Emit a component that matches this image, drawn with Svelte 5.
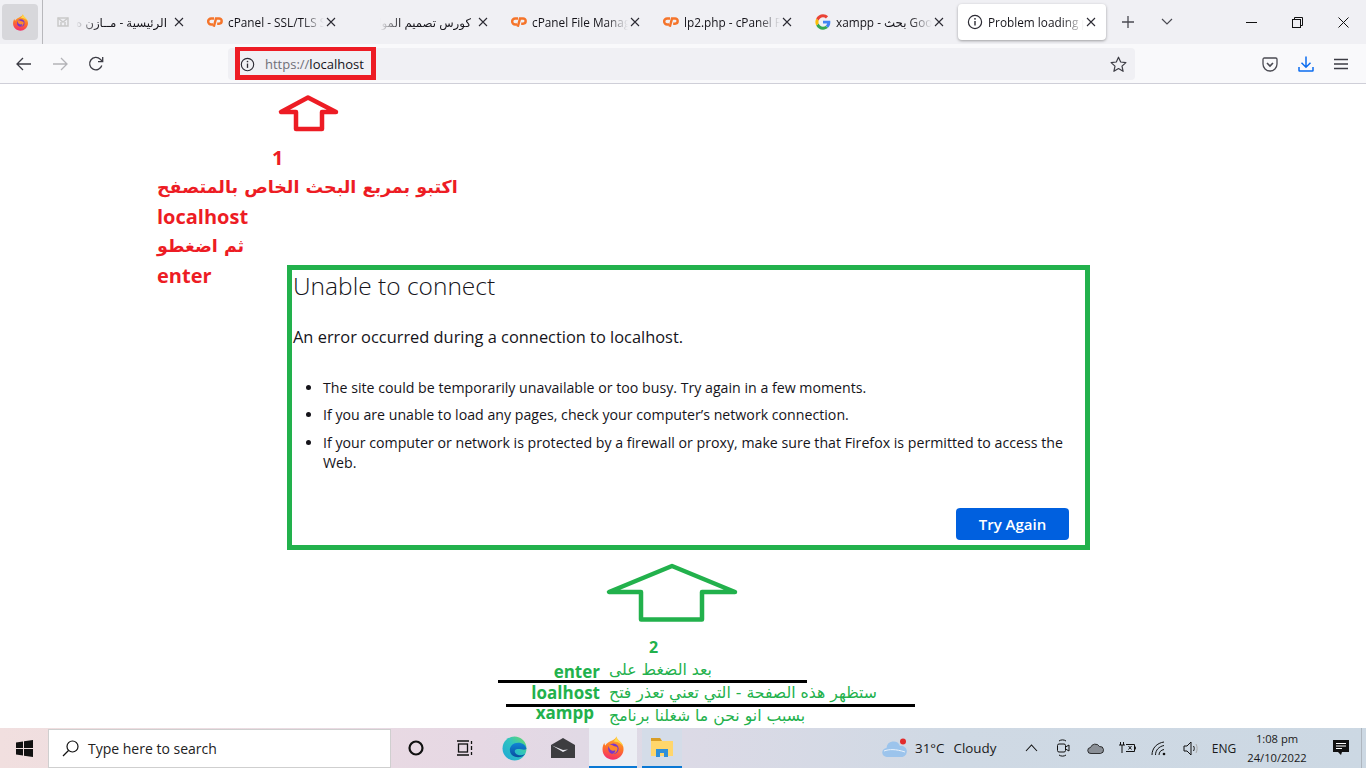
<script>
  const tabs = [
    { title: "الرئيسية - مــازن ه", icon: "mail", rtl: true },
    { title: "cPanel - SSL/TLS S", icon: "cp" },
    { title: "كورس تصميم المواقع -", icon: "none", rtl: true },
    { title: "cPanel File Manag", icon: "cp" },
    { title: "lp2.php - cPanel F", icon: "cp" },
    { title: "xampp - بحث Goo", icon: "g" },
    { title: "Problem loading p", icon: "info", active: true }
  ];
  const tips = [
    "The site could be temporarily unavailable or too busy. Try again in a few moments.",
    "If you are unable to load any pages, check your computer’s network connection.",
    "If your computer or network is protected by a firewall or proxy, make sure that Firefox is permitted to access the Web."
  ];
</script>

{#snippet fox(size)}
  <svg width={size} height={size} viewBox="0 0 32 32">
    <defs>
      <linearGradient id="foxg" x1="0.6" y1="0" x2="0.4" y2="1">
        <stop offset="0" stop-color="#ffb52e" />
        <stop offset="0.5" stop-color="#ff7426" />
        <stop offset="1" stop-color="#f42c6c" />
      </linearGradient>
    </defs>
    <path d="M20.500 0.500c.5 3 2.500 4.500 4.500 6.500 4 3.500 5.500 7.500 5 12-.8 7-7 12.500-14 12.500C8 31.500 2 25.500 2 18c0-3.500 1-6.500 2.500-9 0 1.500.5 3 1.500 3.500C7 9.500 10 8.500 12.500 7c3-1.800 7-3 8-6.500z" fill="url(#foxg)" />
    <path d="M20.500 0.500c.5 3 2.500 4.500 4.500 6.500 2.500 2.200 4 4.500 4.700 7-2-3-4.700-5-8.200-6-1.500-.5-3-.5-5-1 2-1.500 3.500-3.500 4-6.500z" fill="#ffd84a" />
    <circle cx="16.500" cy="17" r="7" fill="#7a35c9" />
    <path d="M10 12.500c2.500-1.500 5-.5 6.500.5 2 1 4.500.5 5.500 2.500.5 4.500-3 8.500-7.500 8 3 .2 5-2 4.500-4.500-3 1.500-7.500.5-9-6.500z" fill="#ff8a2b" />
  </svg>
{/snippet}

{#snippet info(size)}
  <svg width={size} height={size} viewBox="0 0 16 16" fill="none" stroke="#2b2a33" stroke-width="1.2">
    <circle cx="8" cy="8" r="6.6" />
    <path d="M8 7v4.600" stroke-width="1.4" />
    <circle cx="8" cy="4.800" r="0.9" fill="#2b2a33" stroke="none" />
  </svg>
{/snippet}

<div class="screen">
  <header class="tabbar">
    <div class="appbtn">{@render fox(17)}</div>
    <div class="sep"></div>
    <div class="tabs">
      {#each tabs as t}
        <div class="tab" class:active={t.active}>
          <span class="fav">
            {#if t.icon === "cp"}
              <svg width="17" height="12" viewBox="0 0 17 12" fill="none" stroke="#f5742a" stroke-width="2.6">
                <path d="M7.500 2.200H4.400a3.200 3.200 0 0 0 0 6.400h2" />
                <path d="M7.200 11l2.400-8.800h3.200a2.600 2.600 0 0 1 0 5.600h-2" />
              </svg>
            {:else if t.icon === "g"}
              <svg width="16" height="16" viewBox="0 0 48 48">
                <path fill="#4285f4" d="M46 24.500c0-1.600-.1-3.100-.4-4.500H24v8.500h12.400c-.5 2.900-2.100 5.300-4.600 7l7.200 5.600C43.200 37.200 46 31.400 46 24.500z" />
                <path fill="#34a853" d="M24 47c6.200 0 11.400-2 15-5.500l-7.200-5.600c-2 1.300-4.600 2.100-7.800 2.100-6 0-11-4-12.900-9.500l-7.400 5.800C7.500 41.900 15.100 47 24 47z" />
                <path fill="#fbbc05" d="M11.100 28.500c-.5-1.400-.7-2.900-.7-4.500s.3-3.100.7-4.500l-7.400-5.800C2.300 16.800 1 20.300 1 24s1.300 7.200 2.700 10.300z" />
                <path fill="#ea4335" d="M24 10c3.400 0 6.400 1.200 8.800 3.400l6.400-6.400C35.400 3.400 30.200 1 24 1 15.100 1 7.500 6.100 3.700 13.700l7.400 5.800C13 14 18 10 24 10z" />
              </svg>
            {:else if t.icon === "info"}
              {@render info(16)}
            {:else if t.icon === "mail"}
              <svg width="12" height="12" viewBox="0 0 12 12" fill="none" stroke="#c9c9c9" stroke-width="1.500">
                <rect x="1" y="2" width="10" height="8" />
                <path d="M1 2l5 4 5-4M4 6v4M8 6v4" />
              </svg>
            {/if}
          </span>
          <span class="title" class:rtl={t.rtl} dir={t.rtl ? "rtl" : "ltr"}>{t.title}</span>
          <svg class="close" width="10" height="10" viewBox="0 0 10 10" stroke="#2b2a33" stroke-width="1.100">
            <path d="M1 1l8 8M9 1l-8 8" />
          </svg>
        </div>
      {/each}
    </div>
    <div class="newtab">
      <svg width="14" height="14" viewBox="0 0 14 14" stroke="#4a4a52" stroke-width="1.300"><path d="M7 1v12M1 7h12" /></svg>
    </div>
    <div class="tablist">
      <svg width="12" height="8" viewBox="0 0 12 8" fill="none" stroke="#4a4a52" stroke-width="1.200"><path d="M1 1l5 5 5-5" /></svg>
    </div>
    <div class="winctl">
      <button aria-label="Minimise"><svg width="11" height="11" viewBox="0 0 11 11" stroke="#111" stroke-width="1"><path d="M0 5.500h11" /></svg></button>
      <button aria-label="Restore"><svg width="11" height="11" viewBox="0 0 11 11" fill="none" stroke="#111" stroke-width="1"><rect x="0.500" y="2.500" width="8" height="8" /><path d="M2.500 2.500V0.500h8v8h-2" /></svg></button>
      <button aria-label="Close"><svg width="11" height="11" viewBox="0 0 11 11" stroke="#111" stroke-width="1"><path d="M0.500 0.500l10 10M10.500 0.500l-10 10" /></svg></button>
    </div>
  </header>

  <nav class="toolbar">
    <div class="navbtns">
      <svg width="16" height="14" viewBox="0 0 16 14" fill="none" stroke="#3c3c44" stroke-width="1.300"><path d="M15 7H1.500M7 1L1 7l6 6" /></svg>
      <svg width="16" height="14" viewBox="0 0 16 14" fill="none" stroke="#b4b4b8" stroke-width="1.300"><path d="M1 7h13.500M9 1l6 6-6 6" /></svg>
      <svg width="16" height="16" viewBox="0 0 16 16" fill="none" stroke="#3c3c44" stroke-width="1.300"><path d="M13.800 9.500A6.200 6.200 0 1 1 12.300 3.300L14.500 5.400" /><path d="M14.700 1v4.700H10" /></svg>
    </div>
    <div class="urlbar">
      <span class="urlinfo">{@render info(15)}</span>
      <span class="url"><span class="dim">https://</span>localhost</span>
      <span class="marker"></span>
      <svg class="star" width="17" height="17" viewBox="0 0 17 17" fill="none" stroke="#3c3c44" stroke-width="1.200" stroke-linejoin="round"><path d="M8.500 1.200l2.200 4.800 5.200.6-3.900 3.500 1.100 5.200-4.600-2.700-4.600 2.700 1.100-5.200L1.100 6.600l5.200-.6z" /></svg>
    </div>
    <div class="tools">
      <svg width="16" height="15" viewBox="0 0 16 15" fill="none" stroke="#4a4a52" stroke-width="1.300"><path d="M2.300 1h11.400c.7 0 1.300.6 1.300 1.300V7a7 7 0 0 1-14 0V2.300C1 1.600 1.600 1 2.300 1z" /><path d="M5 6l3 3 3-3" stroke-width="1.600" /></svg>
      <svg width="16" height="16" viewBox="0 0 16 16" fill="none" stroke="#0b6cf0" stroke-width="1.500"><path d="M8 0.500v10.500M3.500 6.800L8 11.200l4.500-4.400M1 11v3.500c0 .3.200.5.500.5h13c.3 0 .5-.2.500-.5V11" /></svg>
      <svg width="14" height="12" viewBox="0 0 14 12" stroke="#3c3c44" stroke-width="1.300"><path d="M0 1.500h14M0 6h14M0 10.500h14" /></svg>
    </div>
  </nav>

  <main class="page">
    <section class="errorbox">
      <h1>Unable to connect</h1>
      <p>An error occurred during a connection to localhost.</p>
      <ul>
        {#each tips as tip}
          <li>{tip}</li>
        {/each}
      </ul>
      <div class="actions"><button class="retry">Try Again</button></div>
    </section>

    <svg class="arrow arrow-red" width="66" height="42" viewBox="0 0 66 42" fill="none" stroke="#ed1c24" stroke-width="4.500" stroke-linejoin="round">
      <path d="M33 3.500L6 18h15v17h26V18h14z" />
    </svg>
    <div class="note note-red">
      <div class="num">1</div>
      <div dir="rtl" class="ar">اكتبو بمربع البحث الخاص بالمتصفح</div>
      <div>localhost</div>
      <div dir="rtl" class="ar">ثم اضغطو</div>
      <div>enter</div>
    </div>

    <svg class="arrow arrow-green" width="134" height="62" viewBox="0 0 134 62" fill="none" stroke="#22b14c" stroke-width="4.500" stroke-linejoin="round">
      <path d="M67 5L4 31h32v27.500h61V31h33z" />
    </svg>
    <div class="note-green">
      <div class="num2">2</div>
      <div class="grow">
        <span class="en first">enter</span><span dir="rtl" class="ar2">بعد الضغط على</span>
        <span class="en">loalhost</span><span dir="rtl" class="ar2">ستظهر هذه الصفحة - التي تعني تعذر فتح</span>
        <span class="en last">xampp</span><span dir="rtl" class="ar2">بسبب انو نحن ما شغلنا برنامج</span>
      </div>
    </div>
    <div class="rule rule-a"></div>
    <div class="rule rule-b"></div>
  </main>

  <footer class="taskbar">
    <div class="start">
      <svg width="17" height="17" viewBox="0 0 17 17" fill="#111"><path d="M0 2.500l7-1v6.500H0zM8 1.300L17 0v8H8zM0 9h7v6.500l-7-1zM8 9h9v8l-9-1.300z" /></svg>
    </div>
    <div class="search">
      <svg width="17" height="17" viewBox="0 0 17 17" fill="none" stroke="#111" stroke-width="1.200"><circle cx="10.500" cy="6.500" r="5.500" /><path d="M6.500 10.500L1 16" /></svg>
      <span>Type here to search</span>
    </div>
    <div class="pins">
      <div class="pin"><svg width="16" height="16" viewBox="0 0 16 16" fill="none" stroke="#111" stroke-width="2.200"><circle cx="8" cy="8" r="6.500" /></svg></div>
      <div class="pin"><svg width="17" height="16" viewBox="0 0 17 16" fill="none" stroke="#111" stroke-width="1.300"><path d="M1 1h12M1 15h12" /><rect x="2.500" y="4" width="9" height="8" /><path d="M15.500 1v3M15.500 6v4M15.500 12v3" /></svg></div>
      <div class="pin edge">
        <svg width="25" height="25" viewBox="0 0 24 24">
          <defs>
            <linearGradient id="edge1" x1="0" y1="1" x2="1" y2="0"><stop offset="0" stop-color="#1fa5d8" /><stop offset="0.55" stop-color="#2ec3c0" /><stop offset="1" stop-color="#6fdc62" /></linearGradient>
            <linearGradient id="edge2" x1="0.500" y1="0" x2="0.500" y2="1"><stop offset="0" stop-color="#0f86d6" /><stop offset="1" stop-color="#0a4c9e" /></linearGradient>
          </defs>
          <circle cx="12" cy="12" r="11.500" fill="url(#edge1)" />
          <path d="M23.500 13c0-4-4-6.500-8-6.500-4.500 0-8 3-8 7 0 3 2 5.500 5 6.500 4 1.200 7.500 0 10-3-2 1.500-7 2.500-9.500-.5-1.500-2-.5-3.500 1.500-4 3-.5 8 2 9-.5z" fill="url(#edge2)" />
        </svg>
      </div>
      <div class="pin mail">
        <svg width="24" height="20" viewBox="0 0 24 20"><path d="M0 7L12 0l12 7v13H0z" fill="#3d3d40" /><path d="M1 7.500l11 6.500 5-2.500-5 .5z" fill="#e8e8ee" /></svg>
      </div>
      <div class="pin on focus">{@render fox(24)}</div>
      <div class="pin on folder">
        <svg width="22" height="22" viewBox="0 0 22 22"><path d="M0 1h9l2 3h11v15H0z" fill="#ffd66b" /><path d="M0 1h9l2 3H0z" fill="#d99e26" /><path d="M5 12h12v8h-4v-4H9v4H5z" fill="#2f8fd8" /></svg>
      </div>
    </div>
    <div class="tray">
      <div class="weather">
        <svg width="26" height="20" viewBox="0 0 26 20">
          <path d="M5 19a4.500 4.500 0 0 1-.5-9A7 7 0 0 1 18 8a5.500 5.500 0 0 1 2.500 11z" fill="#9cc4ec" />
          <path d="M2 13c5-2 12-2 21 1" stroke="#e9f2fb" fill="none" />
          <circle cx="21" cy="3.500" r="3" fill="#e22b2b" />
        </svg>
        <span class="temp">31°C</span>
        <span>Cloudy</span>
      </div>
      <div class="tslot"><svg width="13" height="8" viewBox="0 0 13 8" fill="none" stroke="#111" stroke-width="1.100"><path d="M1 7l5.500-6L12 7" /></svg></div>
      <div class="tslot"><svg width="14" height="18" viewBox="0 0 14 18" fill="none" stroke="#111" stroke-width="1"><rect x="1.500" y="5" width="8" height="8" rx="1.500" /><path d="M9.500 8l3.500-2v6l-3.500-2M3 2c2-1.500 5-1.500 7 0M3 16c2 1.500 5 1.500 7 0" /></svg></div>
      <div class="tslot"><svg width="17" height="11" viewBox="0 0 17 11" fill="#8a8f96" stroke="#111" stroke-width="0.800"><path d="M4 10.500a3 3 0 0 1-.5-6A5 5 0 0 1 12.500 3.500a3.500 3.500 0 0 1 1 7z" /></svg></div>
      <div class="tslot"><svg width="17" height="12" viewBox="0 0 17 12" fill="none" stroke="#111" stroke-width="1"><path d="M1.500 0v3M4.500 0v3M0 3h6M3 3v8" /><path d="M7 2.500h8.500v7H7M15.500 5h1.200v2h-1.200" /><path d="M9.500 4l3 3.500M12.500 4l-3 3.500" /></svg></div>
      <div class="tslot"><svg width="16" height="15" viewBox="0 0 16 15" fill="none" stroke="#111" stroke-width="1"><path d="M1 14c0-7 5-12 12-13M4.500 14c0-5 3.500-8.500 8.500-9.500M8 14c0-3 2-5 5-5.500" /><circle cx="13" cy="13" r="1.300" fill="#111" stroke="none" /></svg></div>
      <div class="tslot"><svg width="17" height="15" viewBox="0 0 17 15" fill="none" stroke="#111" stroke-width="1"><path d="M1 5h3l4-4v13l-4-4H1z" /><path d="M10.500 5c1 1.500 1 3.500 0 5" /><path d="M13 3c1.500 3 1.500 6 0 9" stroke="#aaa" /></svg></div>
      <span class="lang">ENG</span>
      <div class="clock"><span>1:08 pm</span><span>24/10/2022</span></div>
      <svg class="notif" width="16" height="16" viewBox="0 0 16 16"><path d="M0 0h16v12H9l-1 3-3-3H0z" fill="#111" /><path d="M3 3.500h10M3 6h10M3 8.500h6" stroke="#fff" stroke-width="1" /></svg>
      <div class="desk"></div>
    </div>
  </footer>
</div>

<style>
  :global(body) {
    margin: 0;
    background: #fff;
  }

  .screen {
    width: 1366px;
    height: 768px;
    display: flex;
    flex-direction: column;
    overflow: hidden;
    font-family: "Open Sans", "DejaVu Sans", sans-serif;
    color: #15141a;
  }

  .tabbar {
    height: 44px;
    flex: none;
    display: flex;
    align-items: center;
    background: #f0f0f4;
  }

  .appbtn {
    width: 36px;
    height: 36px;
    margin-left: 2px;
    align-self: flex-start;
    margin-top: 4px;
    border-radius: 4px;
    background: #d7d7db;
    display: flex;
    align-items: center;
    justify-content: center;
  }

  .sep {
    width: 1px;
    height: 44px;
    background: #b8b8bc;
    margin-left: 4px;
  }

  .tabs {
    display: flex;
    margin-left: 1px;
    align-self: flex-start;
  }

  .tab {
    width: 148px;
    height: 36px;
    margin: 4px 2px 0;
    padding-left: 9px;
    box-sizing: border-box;
    border-radius: 4px;
    display: flex;
    align-items: center;
    position: relative;
    font-size: 11.800px;
  }

  .tab.active {
    background: #fff;
    box-shadow: 0 1px 3px rgba(0, 0, 0, 0.35);
  }

  .fav {
    width: 16px;
    flex: none;
    display: flex;
    align-items: center;
    justify-content: center;
  }

  .title {
    width: 96px;
    margin-left: 5px;
    white-space: nowrap;
    overflow: hidden;
    -webkit-mask-image: linear-gradient(to left, transparent 0, #000 22px);
    mask-image: linear-gradient(to left, transparent 0, #000 22px);
  }

  .title.rtl {
    width: 91px;
    -webkit-mask-image: linear-gradient(to right, transparent 0, #000 22px);
    mask-image: linear-gradient(to right, transparent 0, #000 22px);
  }

  .close {
    position: absolute;
    left: 128px;
    top: 13px;
  }

  .newtab {
    width: 14px;
    margin-left: 13px;
    display: flex;
  }

  .tablist {
    margin-left: 26px;
    display: flex;
  }

  .winctl {
    margin-left: auto;
    display: flex;
    align-self: stretch;
  }

  .winctl button {
    width: 46px;
    border: 0;
    padding: 0;
    background: none;
    display: flex;
    align-items: center;
    justify-content: center;
  }

  .toolbar {
    height: 40px;
    box-sizing: border-box;
    padding-top: 1px;
    flex: none;
    display: flex;
    align-items: center;
    background: #f9f9fb;
    border-bottom: 1px solid #cfcfd8;
  }

  .navbtns {
    width: 228px;
    flex: none;
    padding-left: 16px;
    box-sizing: border-box;
    display: flex;
    align-items: center;
    gap: 20px;
  }

  .urlbar {
    width: 907px;
    height: 32px;
    flex: none;
    box-sizing: border-box;
    padding-left: 12px;
    border-radius: 4px;
    background: #f0f0f4;
    display: flex;
    align-items: center;
    position: relative;
    font-size: 13px;
  }

  .urlinfo {
    display: flex;
  }

  .url {
    margin-left: 10px;
  }

  .dim {
    color: #6f6f78;
  }

  .marker {
    position: absolute;
    left: 7px;
    top: -1px;
    width: 131px;
    height: 24px;
    border-style: solid;
    border-color: #ed1c24;
    border-width: 4px 5px 5px;
  }

  .star {
    margin-left: auto;
    margin-right: 8px;
  }

  .tools {
    display: flex;
    align-items: center;
    margin-left: 127px;
    gap: 20px;
  }

  .page {
    flex: 1;
    position: relative;
    background: #fff;
  }

  .errorbox {
    margin: 181px 276px 0 287px;
    height: 285px;
    box-sizing: border-box;
    border: 5px solid #22b14c;
    padding: 0 16px 5px 1px;
    display: flex;
    flex-direction: column;
  }

  h1 {
    margin: -1px 0 0;
    font-size: 24.500px;
    font-weight: 300;
    line-height: 33px;
  }

  p {
    margin: 23px 0 0;
    font-size: 16.400px;
    line-height: 24px;
  }

  ul {
    margin: 29px 0 0;
    padding: 0 0 0 30px;
    font-size: 14.180px;
    line-height: 20px;
  }

  li {
    margin-bottom: 7px;
  }

  li:nth-child(2) {
    margin-bottom: 8px;
  }

  .actions {
    margin-top: auto;
    display: flex;
    justify-content: flex-end;
  }

  .retry {
    width: 113px;
    height: 32px;
    border: 0;
    border-radius: 4px;
    background: #0060df;
    color: #fff;
    font-family: inherit;
    font-size: 15px;
    font-weight: 600;
  }

  .arrow {
    position: absolute;
  }

  .arrow-red {
    left: 275px;
    top: 10px;
  }

  .arrow-green {
    left: 605px;
    top: 477px;
  }

  .note {
    position: absolute;
    left: 157px;
    top: 59px;
    color: #ed1c24;
    font-size: 20px;
    font-weight: 700;
    line-height: 29.500px;
  }

  .note .num {
    padding-left: 115px;
  }

  .note .ar {
    width: fit-content;
    font-family: "DejaVu Sans", sans-serif;
    font-size: 17.500px;
    white-space: nowrap;
  }

  .note-green {
    position: absolute;
    left: 500px;
    top: 552px;
    color: #22b14c;
    font-weight: 700;
  }

  .num2 {
    padding-left: 149px;
    font-size: 16px;
    line-height: 22px;
  }

  .grow {
    display: grid;
    grid-template-columns: 100px auto;
    column-gap: 9px;
    align-items: center;
    grid-auto-rows: 23px;
  }

  .en {
    font-size: 17px;
    text-align: right;
  }

  .en.first {
    margin-top: 4px;
  }

  .en.last {
    padding-right: 6px;
    margin-bottom: 6px;
  }

  .ar2 {
    justify-self: start;
    font-family: "DejaVu Sans", sans-serif;
    font-size: 15.700px;
    font-weight: 400;
    white-space: nowrap;
  }

  .rule {
    position: absolute;
    height: 3px;
    background: #000;
  }

  .rule-a {
    left: 498px;
    top: 596px;
    width: 309px;
  }

  .rule-b {
    left: 506px;
    top: 620px;
    width: 409px;
  }

  .taskbar {
    height: 40px;
    flex: none;
    display: flex;
    align-items: center;
    background: linear-gradient(to right, #f1dfdf, #e6d8e4 35%, #dcdae6 50%, #cfd9e4 70%, #ccd8e3);
  }

  .start {
    width: 48px;
    flex: none;
    display: flex;
    justify-content: center;
  }

  .search {
    width: 343px;
    height: 39px;
    margin-top: 1px;
    flex: none;
    box-sizing: border-box;
    padding-left: 13px;
    background: #fff;
    border: 1px solid #cfcfcf;
    display: flex;
    align-items: center;
    gap: 9px;
    font-size: 14px;
    color: #222;
  }

  .pins {
    display: flex;
    align-self: stretch;
    margin-left: 1px;
  }

  .pin {
    width: 48px;
    display: flex;
    align-items: center;
    justify-content: center;
    box-sizing: border-box;
  }

  .pin.edge {
    margin-left: 2px;
  }

  .pin.mail {
    margin-left: 1px;
  }

  .pin.on {
    border-bottom: 2px solid #0a78d4;
    padding-top: 2px;
    margin-left: 2px;
  }

  .pin.focus {
    background: #eceef4;
  }

  .pin.folder {
    width: 40px;
    margin-left: 5px;
    background: #d4dce8;
  }

  .tray {
    margin-left: auto;
    width: 492px;
    display: flex;
    align-items: center;
    align-self: stretch;
    font-size: 13px;
    color: #1a1a1a;
  }

  .weather {
    width: 133px;
    margin-left: 8px;
    display: flex;
    align-items: center;
    gap: 9px;
    flex: none;
    font-size: 13.400px;
  }

  .weather .temp {
    margin-left: -2px;
  }

  .tslot {
    width: 32px;
    flex: none;
    display: flex;
    align-items: center;
    justify-content: center;
  }

  .lang {
    width: 34px;
    flex: none;
    text-align: center;
    font-size: 12px;
  }

  .clock {
    width: 72px;
    flex: none;
    display: flex;
    flex-direction: column;
    align-items: center;
    font-size: 11.200px;
    line-height: 19px;
  }

  .notif {
    flex: none;
    margin-left: 20px;
  }

  .desk {
    width: 1px;
    height: 40px;
    margin-left: 12px;
    background: #aeb6bf;
  }
</style>
